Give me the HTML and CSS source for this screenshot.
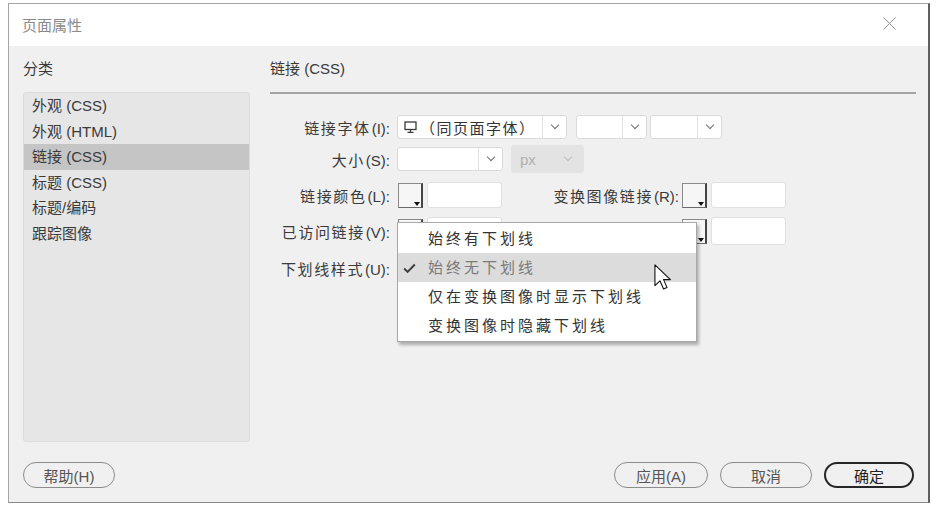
FILE: index.html
```html
<!DOCTYPE html>
<html lang="zh-CN">
<head>
  <meta charset="UTF-8">
  <title>页面属性</title>
  <link rel="stylesheet" href="styles.css">
</head>
<body>
  <div class="dialog">
    <!-- Title bar -->
    <div class="titlebar">
      <span class="title">页面属性</span>
      <svg class="close" width="15" height="15" viewBox="0 0 15 15">
        <path d="M1.5 1.5L13.5 13.5M13.5 1.5L1.5 13.5" stroke="#909090" stroke-width="1" fill="none"/>
      </svg>
    </div>

    <div class="content">
      <!-- Category list -->
      <div class="side">
        <div class="side-head">分类</div>
        <ul class="cat-list">
          <li>外观 (CSS)</li>
          <li>外观 (HTML)</li>
          <li class="selected">链接 (CSS)</li>
          <li>标题 (CSS)</li>
          <li>标题/编码</li>
          <li>跟踪图像</li>
        </ul>
      </div>

      <!-- Link settings -->
      <div class="main">
        <div class="main-head">链接 (CSS)</div>
        <div class="form">
          <div class="row r1">
            <span class="label"><span class="zh">链接字体</span>(I):</span>
            <div class="select w-font">
              <span class="val">
                <svg class="monitor" width="13" height="12" viewBox="0 0 13 12">
                  <rect x="1" y="1" width="11" height="7.5" fill="none" stroke="#3a3a3a" stroke-width="1.3"/>
                  <path d="M6.5 9v2M3.5 11.3h6" stroke="#3a3a3a" stroke-width="1.2"/>
                </svg>
                <span class="font-name">（同页面字体）</span>
              </span>
              <span class="arrow"></span>
            </div>
            <div class="select w-style"><span class="val"></span><span class="arrow"></span></div>
            <div class="select w-weight"><span class="val"></span><span class="arrow"></span></div>
          </div>

          <div class="row r2">
            <span class="label"><span class="zh">大小</span>(S):</span>
            <div class="select w-size"><span class="val"></span><span class="arrow"></span></div>
            <div class="select unit disabled"><span class="val">px</span><span class="arrow"></span></div>
          </div>

          <div class="row r3">
            <span class="label"><span class="zh">链接颜色</span>(L):</span>
            <span class="swatch"></span>
            <span class="input"></span>
            <span class="label right"><span class="zh">变换图像链接</span>(R):</span>
            <span class="swatch"></span>
            <span class="input"></span>
          </div>

          <div class="row r4">
            <span class="label"><span class="zh">已访问链接</span>(V):</span>
            <span class="swatch"></span>
            <span class="input"></span>
            <span class="label right"><span class="zh">活动链接</span>(A):</span>
            <span class="swatch"></span>
            <span class="input"></span>
          </div>

          <div class="row r5">
            <span class="label"><span class="zh">下划线样式</span>(U):</span>
            <div class="select w-under"><span class="val"></span><span class="arrow"></span></div>
          </div>

          <!-- Open dropdown -->
          <ul class="menu">
            <li>始终有下划线</li>
            <li class="hover">
              <svg class="check" width="13" height="11" viewBox="0 0 13 11">
                <path d="M1.2 5.5L4.6 9L11.8 1.5" stroke="#3c3c3c" stroke-width="1.9" fill="none"/>
              </svg>
              始终无下划线
            </li>
            <li>仅在变换图像时显示下划线</li>
            <li>变换图像时隐藏下划线</li>
          </ul>

          <svg class="cursor" width="18" height="26" viewBox="0 0 13 19">
            <path d="M0.6 0.6L0.6 15.8L4.3 12.3L6.9 18.2L9.4 17.1L6.9 11.4L11.9 11.4Z" fill="#fff" stroke="#111" stroke-width="0.8" stroke-linejoin="round"/>
          </svg>
        </div>
      </div>
    </div>

    <!-- Buttons -->
    <div class="footer">
      <button class="btn w-help">帮助(H)</button>
      <div class="spacer"></div>
      <button class="btn w-apply">应用(A)</button>
      <button class="btn w-cancel">取消</button>
      <button class="btn primary w-ok">确定</button>
    </div>
  </div>
</body>
</html>
```

FILE: styles.css
```css
/* General */
body {
  margin: 0;
  background: #fff;
  font-family: "Liberation Sans", "Noto Sans CJK SC", sans-serif;
  color: #3a3a3a;
}

ul {
  list-style: none;
  margin: 0;
  padding: 0;
}

.dialog {
  width: 922px;
  height: 500px;
  margin: 3px 0 0 8px;
  box-sizing: border-box;
  background: #f0f0f0;
  border: 1px solid #a5a5a5;
  border-right: 2px solid #5e5e5e;
  border-bottom-color: #8a8a8a;
  display: flex;
  flex-direction: column;
}

/* Title bar */
.titlebar {
  height: 42px;
  flex: none;
  background: #fff;
  display: flex;
  align-items: center;
  justify-content: space-between;
  padding: 0 31px 0 13px;
}

.title {
  font-size: 15px;
  color: #8a8a8a;
  margin-top: -1px;
}

.close {
  margin-top: -4px;
}

/* Content */
.content {
  height: 396px;
  flex: none;
  display: flex;
  padding: 0 12px 0 14px;
}

.side {
  width: 227px;
  flex: none;
}

.side-head,
.main-head {
  font-size: 15px;
  line-height: 22px;
  padding-top: 12px;
  color: #3a3a3a;
}

.side-head {
  margin-bottom: 12px;
}

.cat-list {
  height: 350px;
  box-sizing: border-box;
  background: #e6e6e6;
  border: 1px solid #dcdcdc;
  border-radius: 3px;
}

.cat-list li {
  height: 25.5px;
  line-height: 25.5px;
  padding-left: 8px;
  font-size: 15px;
  color: #3a3a3a;
}

.cat-list li.selected {
  background: #c5c5c5;
}

.main {
  flex: 1;
  margin-left: 20px;
}

.main-head {
  padding-bottom: 12px;
  border-bottom: 2px solid #a3a3a3;
}

/* Form */
.form {
  position: relative;
  padding-top: 18px;
}

.row {
  display: flex;
  align-items: center;
}

.r1 { height: 30px; }
.r2 { height: 34px; }
.r3 { height: 38px; }
.r4 { height: 34px; }
.r5 { height: 40px; }

.label {
  width: 120px;
  flex: none;
  text-align: right;
  font-size: 15px;
  color: #3a3a3a;
  margin-right: 7px;
}

.label .zh {
  letter-spacing: 1.6px;
  margin-right: 1px;
}

.label.right {
  width: 150px;
  margin-left: 27px;
  margin-right: 3px;
}

.select {
  display: flex;
  height: 24px;
  box-sizing: border-box;
  background: #fff;
  border: 1px solid #dadada;
  border-radius: 3px;
}

.select .val {
  flex: 1;
  display: flex;
  align-items: center;
  padding-left: 5px;
  font-size: 15px;
  color: #333;
}

.select .arrow {
  width: 23px;
  flex: none;
  border-left: 1px solid #e2e2e2;
  display: flex;
  align-items: center;
  justify-content: center;
}

.select .arrow::before {
  content: "";
  width: 5px;
  height: 5px;
  border-right: 1px solid #707070;
  border-bottom: 1px solid #707070;
  transform: rotate(45deg);
  margin-top: -4px;
}

.w-font { width: 170px; }
.w-style { width: 71px; margin-left: 9px; }
.w-weight { width: 72px; margin-left: 3px; }
.w-size { width: 106px; }
.w-under { width: 300px; }

.monitor {
  margin-right: 3px;
  margin-left: 1px;
}

.font-name {
  letter-spacing: 1.5px;
}

.select.unit {
  width: 73px;
  height: 28px;
  margin-left: 8px;
  background: #e3e3e3;
  border-color: #e3e3e3;
}

.select.unit .val {
  padding-left: 8px;
  color: #b0b0b0;
}

.select.unit .arrow {
  border-left: none;
  width: 30px;
}

.select.unit .arrow::before {
  border-color: #bdbdbd;
}

/* Colour swatches */
.swatch {
  position: relative;
  width: 25px;
  height: 25px;
  flex: none;
  box-sizing: border-box;
  background: #f6f6f6;
  border: 1px solid #8a8a8a;
  border-right: 2px solid #444;
  border-bottom-color: #6a6a6a;
  margin-left: 1px;
}

.swatch::after {
  content: "";
  position: absolute;
  right: 1px;
  bottom: 1px;
  border-top: 4px solid #111;
  border-left: 3px solid transparent;
  border-right: 3px solid transparent;
}

.input {
  width: 75px;
  height: 26px;
  flex: none;
  box-sizing: border-box;
  margin-left: 4px;
  background: #fff;
  border: 1px solid #e0e0e0;
  border-radius: 3px;
}

.r3 .label.right + .swatch,
.r4 .label.right + .swatch {
  margin-left: 0;
}

.r4 .input {
  height: 28px;
}

/* Dropdown menu */
.menu {
  position: absolute;
  left: 127px;
  top: 128px;
  width: 300px;
  box-sizing: border-box;
  padding: 1px 0;
  background: #fff;
  border: 1px solid #a8a8a8;
  box-shadow: 2px 3px 3px rgba(0, 0, 0, 0.28);
  z-index: 2;
}

.menu li {
  position: relative;
  height: 29px;
  line-height: 29px;
  padding-left: 30px;
  font-size: 15px;
  letter-spacing: 3px;
  color: #333;
}

.menu li.hover {
  background: #dcdcdc;
  color: #7a7a7a;
}

.check {
  position: absolute;
  left: 5px;
  top: 10px;
}

.cursor {
  position: absolute;
  left: 384px;
  top: 170px;
  z-index: 3;
}

/* Footer buttons */
.footer {
  flex: 1;
  display: flex;
  align-items: flex-start;
  padding: 20px 14px 0 14px;
  gap: 12px;
}

.spacer {
  flex: 1;
}

.btn {
  height: 26px;
  box-sizing: border-box;
  padding: 0;
  background: #f0f0f0;
  border: 1px solid #8c8c8c;
  border-radius: 13px;
  font-family: "Liberation Sans", "Noto Sans CJK SC", sans-serif;
  font-size: 15px;
  color: #555;
}

.btn.primary {
  border: 2px solid #262626;
  color: #222;
}

.w-help { width: 92px; }
.w-apply { width: 94px; }
.w-cancel { width: 92px; }
.w-ok { width: 90px; }
```
